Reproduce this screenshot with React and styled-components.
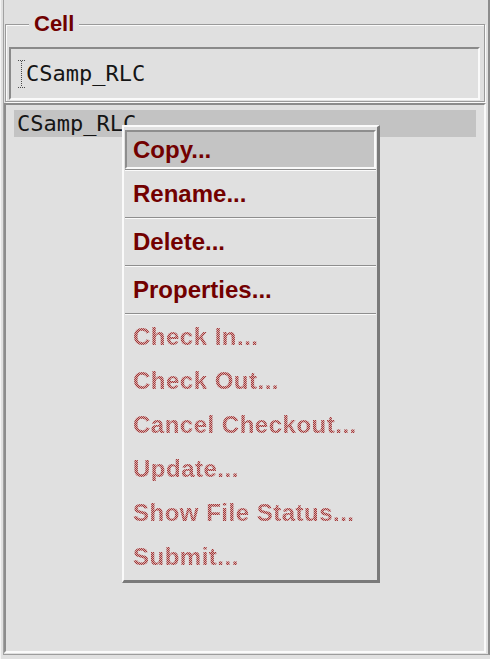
import React from "react";
import styled, { createGlobalStyle, css } from "styled-components";

const Global = createGlobalStyle`
  html, body { margin: 0; padding: 0; background: #e0e0e0; }
  body { width: 490px; height: 659px; overflow: hidden; }
`;

const Window = styled.div`
  position: relative;
  width: 490px;
  height: 659px;
  box-sizing: border-box;
  padding: 0 0 4px 3px;
  background: #e0e0e0;
  display: flex;
  box-shadow: inset 1px 0 0 #f4f4f4;
`;

const Panel = styled.div`
  flex: 1;
  display: flex;
  flex-direction: column;
  border-left: 1px solid #a2a2a2;
  border-right: 2px solid #8c8c8c;
  border-bottom: 1px solid #9c9c9c;
  padding-bottom: 1px;
`;

const Group = styled.fieldset`
  margin: 13px 3px 0 1px;
  padding: 12px 4px 1px 3px;
  min-width: 0;
  border: 1px solid #9a9a9a;
  box-shadow: inset 1px 1px 0 #fafafa, 1px 1px 0 #fafafa;
`;

const Legend = styled.legend`
  margin-left: 20px;
  padding: 0 5px;
  background: #e0e0e0;
  font: bold 22px/22px "Liberation Sans", Arial, sans-serif;
  color: #700000;
`;

const Entry = styled.div`
  height: 53px;
  box-sizing: border-box;
  border: 2px solid;
  border-color: #8a8a8a #fafafa #fafafa #8a8a8a;
  display: flex;
  align-items: center;
  padding-left: 6px;
  font: 22px/1 "DejaVu Sans Mono", "Liberation Mono", monospace;
  color: #151515;
`;

const List = styled.div`
  flex: 1;
  margin: 1px 2px 0 0;
  border: 2px solid;
  border-color: #8c8c8c #fafafa #fafafa #8c8c8c;
  padding: 5px 8px 0 8px;
`;

const Row = styled.div`
  height: 27px;
  display: flex;
  align-items: center;
  padding-left: 3px;
  background: ${(p) => (p.$selected ? "#c3c3c3" : "transparent")};
  font: 22px/1 "DejaVu Sans Mono", "Liberation Mono", monospace;
  color: #151515;
`;

const Menu = styled.div`
  position: absolute;
  left: 122px;
  top: 125px;
  width: 258px;
  box-sizing: border-box;
  border-style: solid;
  border-width: 2px 3px 3px 2px;
  border-color: #fafafa #7a7a7a #7a7a7a #fafafa;
  padding: 3px 1px 1px;
  background: #e0e0e0;
  display: flex;
  flex-direction: column;
`;

const Item = styled.div`
  height: ${(p) => (p.$active ? 39 : p.$disabled ? 44 : 46)}px;
  box-sizing: border-box;
  display: flex;
  align-items: center;
  padding-left: 8px;
  font: bold 24px/1 "Liberation Sans", Arial, sans-serif;
  color: #720000;
  white-space: nowrap;
  ${(p) =>
    p.$active &&
    css`
      padding-left: 6px;
      background: #c4c4c4;
      border: 2px solid;
      border-color: #8e8e8e #fafafa #fafafa #8e8e8e;
    `}
`;

const DisabledLabel = styled.span`
  letter-spacing: 0.5px;
  color: #b76c6c;
  background-image: repeating-conic-gradient(#9c3a3a 0 25%, #dcaaaa 0 50%);
  background-size: 2px 2px;
  -webkit-background-clip: text;
  background-clip: text;
  -webkit-text-fill-color: transparent;
`;

const Separator = styled.div`
  height: 2px;
  box-sizing: border-box;
  border-top: 1px solid #8e8e8e;
  border-bottom: 1px solid #fafafa;
`;

const IBeam = () => (
  <svg width="9" height="28" viewBox="0 0 9 28" style={{ flex: "none" }}>
    <g stroke="#4a4a4a" strokeWidth="1" fill="none" strokeDasharray="1 1">
      <path d="M1 0.5H8" />
      <path d="M4.5 1V27" />
      <path d="M1 27.5H8" />
    </g>
  </svg>
);

const enabled = ["Copy...", "Rename...", "Delete...", "Properties..."];
const disabled = [
  "Check In...",
  "Check Out...",
  "Cancel Checkout...",
  "Update...",
  "Show File Status...",
  "Submit...",
];

export default function App() {
  return (
    <>
      <Global />
      <Window>
        <Panel>
          <Group>
            <Legend>Cell</Legend>
            <Entry>
              <IBeam />
              <span>CSamp_RLC</span>
            </Entry>
          </Group>
          <List>
            <Row $selected>CSamp_RLC</Row>
          </List>
        </Panel>
        <Menu>
          {enabled.map((label, i) => (
            <React.Fragment key={label}>
              <Item $active={i === 0}>{label}</Item>
              <Separator />
            </React.Fragment>
          ))}
          {disabled.map((label) => (
            <Item key={label} $disabled>
              <DisabledLabel>{label}</DisabledLabel>
            </Item>
          ))}
        </Menu>
      </Window>
    </>
  );
}
